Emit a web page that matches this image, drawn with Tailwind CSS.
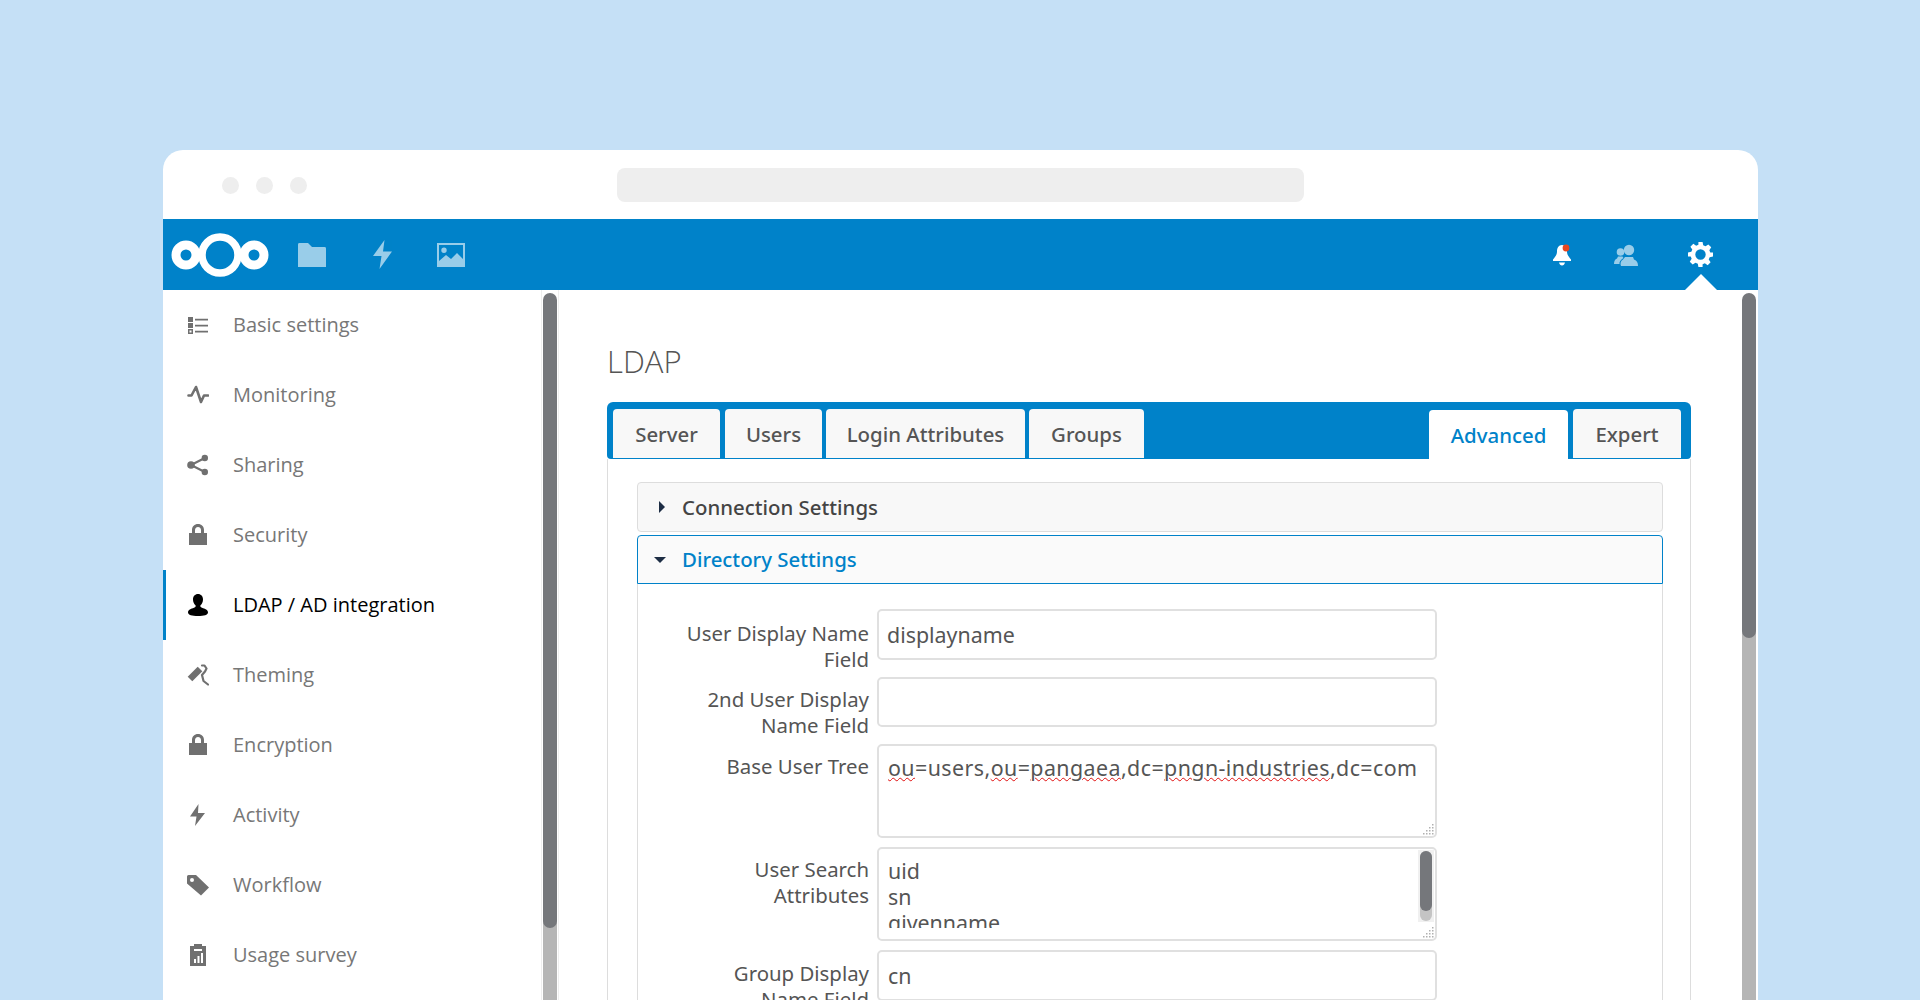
<!DOCTYPE html>
<html lang="en">
<head>
  <meta charset="UTF-8">
  <title>LDAP / AD integration</title>
  <script src="https://cdn.jsdelivr.net/npm/@tailwindcss/browser@4"></script>
</head>
<body class="h-[1000px] overflow-hidden bg-[#c5e0f6] pt-[150px] pl-[163px] pr-[162px] font-['Open_Sans',sans-serif]">
  <div class="h-[850px] overflow-hidden rounded-t-[20px] bg-white">

    <!-- browser chrome -->
    <div class="flex h-[69px] items-start">
      <div class="mt-[27px] ml-[59px] flex gap-[17px]">
        <span class="size-[17px] rounded-full bg-[#eeeeee]"></span>
        <span class="size-[17px] rounded-full bg-[#eeeeee]"></span>
        <span class="size-[17px] rounded-full bg-[#eeeeee]"></span>
      </div>
      <div class="mt-[18px] ml-[310px] h-[34px] w-[687px] rounded-[8px] bg-[#eeeeee]"></div>
    </div>

    <!-- nextcloud header -->
    <header class="relative flex h-[71px] items-center bg-[#0082c9]">
      <svg class="ml-[8px] h-[46px] w-[98px]" viewBox="0 0 98 46" fill="none" stroke="#fff">
        <circle cx="49" cy="23" r="18" stroke-width="7.5"/>
        <circle cx="15" cy="23" r="10" stroke-width="9"/>
        <circle cx="83" cy="23" r="10" stroke-width="9"/>
      </svg>
      <svg class="ml-[29px] h-[24px] w-[28px] opacity-60" viewBox="0 0 28 24" fill="#fff"><path d="M0 1.500A1.500 1.500 0 0 1 1.500 0h8.500l4 4h12.500a1.500 1.500 0 0 1 1.500 1.500V24H0z"/></svg>
      <svg class="ml-[47px] h-[29px] w-[19px] opacity-60" viewBox="0 0 19 29" fill="#fff"><path d="M11.500 0 0 16h8.500L6.500 29 19 11.500h-9z"/></svg>
      <svg class="ml-[45px] h-[24px] w-[28px] opacity-60" viewBox="0 0 28 24" fill="#fff"><path fill-rule="evenodd" d="M0 0h28v24H0zM2 2v16l7-6 5 4 6-6 6 6V2zM7 4.500a2.700 2.700 0 1 1 0 5.400 2.700 2.700 0 0 1 0-5.400z"/></svg>
      <div class="ml-auto flex items-center">
        <svg class="h-[22px] w-[18px]" viewBox="0 0 18 22" fill="#fff">
          <path d="M9 1C5.500 1 4 4 4 7.500 4 11 2 13 0 15.500V17h18v-1.500C16 13 14 11 14 7.500 14 4 12.500 1 9 1zM6 18.500h6c-.5 2-1.500 3-3 3s-2.500-1-3-3z"/>
          <circle cx="13" cy="4" r="3.400" fill="#e9461e"/>
        </svg>
        <svg class="ml-[43px] h-[22px] w-[24px] opacity-60" viewBox="0 0 24 22" fill="#fff">
          <circle cx="15" cy="6" r="5.200"/><circle cx="6.500" cy="8" r="3.800"/>
          <path d="M7 22c-1-2.500-.5-5 2-6.500l2-2.500h8l1 2.500c3 1 4 3.500 4 6.500zM0 20c0-3 1-4.500 3-5.500l1-2h4.500l1 1.500C7 15.500 5 17.500 5.500 20z"/>
        </svg>
        <svg class="mr-[45px] ml-[50px] size-[25px]" viewBox="0 0 24 24" fill="#fff"><path fill-rule="evenodd" d="M10 0h4l.6 3.200 2.200.9 2.700-1.800 2.800 2.800-1.800 2.700.9 2.200L24 10v4l-3.200.6-.9 2.200 1.800 2.700-2.800 2.800-2.700-1.800-2.200.9L14 24h-4l-.6-3.200-2.200-.9-2.700 1.800-2.800-2.800 1.800-2.700-.9-2.200L0 14v-4l3.200-.6.900-2.200-1.800-2.700 2.800-2.800 2.700 1.800 2.200-.9zM12 7a5 5 0 1 0 0 10 5 5 0 0 0 0-10z"/></svg>
      </div>
      <span class="absolute right-[41px] bottom-0 size-0 border-x-[16px] border-b-[16px] border-x-transparent border-b-white"></span>
    </header>

    <div class="flex h-[710px]">
      <!-- settings sidebar -->
      <nav class="w-[378px] shrink-0 text-[20px] text-[#777777]">
        <a class="flex h-[70px] items-center pl-[24px]">
          <svg class="size-[22px] shrink-0" viewBox="0 0 22 22" fill="#707070"><path fill-rule="evenodd" d="M1 3h5v5H1zM1 9h5v5H1zM1 15h5v5H1zM2.500 16.500v2h2v-2zM8 4.800h13v1.600H8zM8 10.800h13v1.600H8zM8 16.800h13v1.600H8z"/></svg>
          <span class="ml-[24px]">Basic settings</span>
        </a>
        <a class="flex h-[70px] items-center pl-[24px]">
          <svg class="size-[22px] shrink-0" viewBox="0 0 22 22" fill="none" stroke="#707070" stroke-width="2.600" stroke-linejoin="round" stroke-linecap="round"><path d="M1.500 11.500h3L9 3l5 15 3-6.500h4"/></svg>
          <span class="ml-[24px]">Monitoring</span>
        </a>
        <a class="flex h-[70px] items-center pl-[24px]">
          <svg class="size-[22px] shrink-0" viewBox="0 0 22 22" fill="#707070"><circle cx="17.800" cy="4" r="3.200"/><circle cx="4" cy="11" r="3.800"/><circle cx="17.800" cy="18" r="3.200"/><path fill="none" stroke="#707070" stroke-width="2.200" d="M17.800 4 4 11l13.800 7"/></svg>
          <span class="ml-[24px]">Sharing</span>
        </a>
        <a class="flex h-[70px] items-center pl-[24px]">
          <svg class="size-[22px] shrink-0" viewBox="0 0 22 22" fill="#707070"><path fill-rule="evenodd" d="M11 0c3.500 0 6 2.500 6 6v3h3v12H2V9h3V6c0-3.500 2.500-6 6-6zm0 3C9 3 8 4.500 8 6v3h6V6c0-1.500-1-3-3-3z"/></svg>
          <span class="ml-[24px]">Security</span>
        </a>
        <a class="flex h-[70px] items-center border-l-[3px] border-[#0082c9] pl-[21px] text-black">
          <svg class="size-[22px] shrink-0" viewBox="0 0 22 22" fill="#000"><path d="M11 0c3 0 5 2.300 5 5.500 0 2.500-1 4.500-2.500 5.800-.500 1 0 2 1.500 2.500 3 1 6 2 6 4.700 0 2.500-4 3.500-10 3.500S1 21 1 18.500c0-2.700 3-3.700 6-4.700 1.500-.5 2-1.500 1.500-2.500C7 10 6 8 6 5.500 6 2.300 8 0 11 0z"/></svg>
          <span class="ml-[24px]">LDAP / AD integration</span>
        </a>
        <a class="flex h-[70px] items-center pl-[24px]">
          <svg class="size-[22px] shrink-0" viewBox="0 0 22 22" fill="none" stroke="#707070"><path stroke-width="6.500" d="M3 15 13 5"/><path stroke-width="2.200" stroke-linecap="round" stroke-linejoin="round" d="M15 1.500h2.500l2 3-1.500 3-3 3.500 1.500 6 4.500 3.500"/></svg>
          <span class="ml-[24px]">Theming</span>
        </a>
        <a class="flex h-[70px] items-center pl-[24px]">
          <svg class="size-[22px] shrink-0" viewBox="0 0 22 22" fill="#707070"><path fill-rule="evenodd" d="M11 0c3.500 0 6 2.500 6 6v3h3v12H2V9h3V6c0-3.500 2.500-6 6-6zm0 3C9 3 8 4.500 8 6v3h6V6c0-1.500-1-3-3-3z"/></svg>
          <span class="ml-[24px]">Encryption</span>
        </a>
        <a class="flex h-[70px] items-center pl-[24px]">
          <svg class="size-[22px] shrink-0" viewBox="0 0 22 22" fill="#707070"><path d="M11.500 0 3 12.500h6.500L8 22l10-13h-7z"/></svg>
          <span class="ml-[24px]">Activity</span>
        </a>
        <a class="flex h-[70px] items-center pl-[24px]">
          <svg class="size-[22px] shrink-0" viewBox="0 0 22 22" fill="#707070"><path fill-rule="evenodd" d="M0 2.500A1.500 1.500 0 0 1 1.500 1H9l13 12.500-8 8L0 9.500zM5 4a2 2 0 1 0 0 4 2 2 0 0 0 0-4z"/></svg>
          <span class="ml-[24px]">Workflow</span>
        </a>
        <a class="flex h-[70px] items-center pl-[24px]">
          <svg class="size-[22px] shrink-0" viewBox="0 0 22 22" fill="#707070"><path fill-rule="evenodd" d="M3 2h4V0h8v2h4v20H3zM7 5v2h8V5zM7 15v4h2v-4zM10.500 12v7h2v-7zM14 9v10h2V9z"/></svg>
          <span class="ml-[24px]">Usage survey</span>
        </a>
      </nav>

      <!-- sidebar scrollbar -->
      <div class="flex w-[18px] shrink-0 flex-col border-x border-[#eeeeee] px-px pt-[3px]">
        <div class="relative z-10 h-[635px] shrink-0 rounded-[7px] bg-[#75777b]"></div>
        <div class="-mt-[7px] h-[100px] shrink-0 bg-[#b5b5b5]"></div>
      </div>

      <!-- main content -->
      <main class="flex w-[1183px] shrink-0 flex-col pl-[48px] font-['Noto_Sans',sans-serif] text-[#555555]">
        <h2 class="mt-[50px] shrink-0 font-['Open_Sans',sans-serif] text-[31px] leading-[42px] font-light">LDAP</h2>
        <div class="mt-[20px] flex h-[57px] w-[1084px] shrink-0 items-end gap-[4px] rounded-t-[6px] rounded-b-[4px] bg-[#0082c9] pr-[10px] pb-px pl-[6px] text-[20.4px] font-medium">
          <a class="flex h-[49px] w-[107px] items-center justify-center rounded-t-[4px] bg-[#f8f8f8] pt-[2px]">Server</a>
          <a class="ml-px flex h-[49px] w-[97px] items-center justify-center rounded-t-[4px] bg-[#f8f8f8] pt-[2px]">Users</a>
          <a class="flex h-[49px] w-[199px] items-center justify-center rounded-t-[4px] bg-[#f8f8f8] pt-[2px]">Login Attributes</a>
          <a class="flex h-[49px] w-[115px] items-center justify-center rounded-t-[4px] bg-[#f8f8f8] pt-[2px]">Groups</a>
          <a class="-mb-px ml-auto flex h-[49px] w-[139px] items-center justify-center rounded-t-[4px] bg-white pt-[2px] text-[#0082c9]">Advanced</a>
          <a class="ml-px flex h-[49px] w-[108px] items-center justify-center rounded-t-[4px] bg-[#f8f8f8] pt-[2px]">Expert</a>
        </div>
        <div class="w-[1084px] flex-1 border-x border-[#dddddd] pt-[23px] pr-[27px] pl-[29px] text-[20.4px]">
          <div class="flex h-[50px] items-center rounded-[4px] border border-[#dddddd] bg-[#f8f8f8] pl-[21px] font-medium text-[#444444]">
            <span class="size-0 border-y-[6px] border-l-[6px] border-y-transparent border-l-[#1d2d44]"></span>
            <span class="ml-[17px]">Connection Settings</span>
          </div>
          <div class="mt-[3px] flex h-[49px] items-center rounded-t-[4px] border border-[#0082c9] bg-[#fafafa] pl-[16px] font-medium text-[#0082c9]">
            <span class="size-0 border-x-[6px] border-t-[6px] border-x-transparent border-t-[#1d2d44]"></span>
            <span class="ml-[16px]">Directory Settings</span>
          </div>
          <div class="flex h-[420px] flex-col border-x border-[#dddddd] pt-[25px]">
            <div class="flex h-[68px] shrink-0 gap-[8px]">
              <label class="w-[231px] pt-[11px] text-right leading-[26px]">User Display Name<br>Field</label>
              <input class="h-[51px] w-[560px] rounded-[5px] border-2 border-[#e0e0e0] bg-white px-[8px] text-[21.4px] outline-none" value="displayname">
            </div>
            <div class="flex h-[67px] shrink-0 gap-[8px]">
              <label class="w-[231px] pt-[9px] text-right leading-[26px]">2nd User Display<br>Name Field</label>
              <input class="h-[50px] w-[560px] rounded-[5px] border-2 border-[#e0e0e0] bg-white px-[8px] text-[21.4px] outline-none">
            </div>
            <div class="flex h-[103px] shrink-0 gap-[8px]">
              <label class="w-[231px] pt-[9px] text-right leading-[26px]">Base User Tree</label>
              <div class="relative h-[94px] w-[560px] rounded-[5px] border-2 border-[#e0e0e0] bg-white px-[9px] pt-[9px] text-[21.4px] leading-[26px] tracking-[0.43px] whitespace-nowrap">
                <span class="underline decoration-[#e01010] decoration-wavy decoration-1">ou</span>=users,<span class="underline decoration-[#e01010] decoration-wavy decoration-1">ou</span>=<span class="underline decoration-[#e01010] decoration-wavy decoration-1">pangaea</span>,dc=<span class="underline decoration-[#e01010] decoration-wavy decoration-1">pngn-industries</span>,dc=com
                <svg class="absolute right-0 bottom-0 size-[13px]" viewBox="0 0 13 13" fill="#b0b0b0"><path d="M10 1h1.500v1.500H10zM7 4h1.500v1.500H7zM10 4h1.500v1.500H10zM4 7h1.500v1.500H4zM7 7h1.500v1.500H7zM10 7h1.500v1.500H10zM1 10h1.500v1.500H1zM4 10h1.500v1.500H4zM7 10h1.500v1.500H7zM10 10h1.500v1.500H10z"/></svg>
              </div>
            </div>
            <div class="flex h-[103px] shrink-0 gap-[8px]">
              <label class="w-[231px] pt-[9px] text-right leading-[26px]">User Search<br>Attributes</label>
              <div class="relative h-[94px] w-[560px] rounded-[5px] border-2 border-[#e0e0e0] bg-white px-[9px] pt-[9px] text-[21.4px] leading-[26px]">
                <div class="h-[70px] overflow-hidden">uid<br>sn<br>givenname</div>
                <div class="absolute top-px right-px h-[72px] w-[16px] bg-[#f0f0f0] px-[2px] pt-[1px]">
                  <div class="h-[70px] rounded-[6px] bg-[#c4c4c4]">
                    <div class="h-[60px] rounded-[6px] bg-[#75777b]"></div>
                  </div>
                </div>
                <svg class="absolute right-0 bottom-0 size-[13px]" viewBox="0 0 13 13" fill="#b0b0b0"><path d="M10 1h1.500v1.500H10zM7 4h1.500v1.500H7zM10 4h1.500v1.500H10zM4 7h1.500v1.500H4zM7 7h1.500v1.500H7zM10 7h1.500v1.500H10zM1 10h1.500v1.500H1zM4 10h1.500v1.500H4zM7 10h1.500v1.500H7zM10 10h1.500v1.500H10z"/></svg>
              </div>
            </div>
            <div class="flex h-[68px] shrink-0 gap-[8px]">
              <label class="w-[231px] pt-[10px] text-right leading-[26px]">Group Display<br>Name Field</label>
              <input class="h-[51px] w-[560px] rounded-[5px] border-2 border-[#e0e0e0] bg-white px-[9px] text-[21.4px] outline-none" value="cn">
            </div>
          </div>
        </div>
      </main>

      <!-- main scrollbar -->
      <div class="flex w-[16px] shrink-0 flex-col pr-[2px] pt-[3px]">
        <div class="relative z-10 h-[345px] shrink-0 rounded-[7px] bg-[#75777b]"></div>
        <div class="-mt-[7px] h-[400px] shrink-0 bg-[#b5b5b5]"></div>
      </div>
    </div>
  </div>
</body>
</html>
